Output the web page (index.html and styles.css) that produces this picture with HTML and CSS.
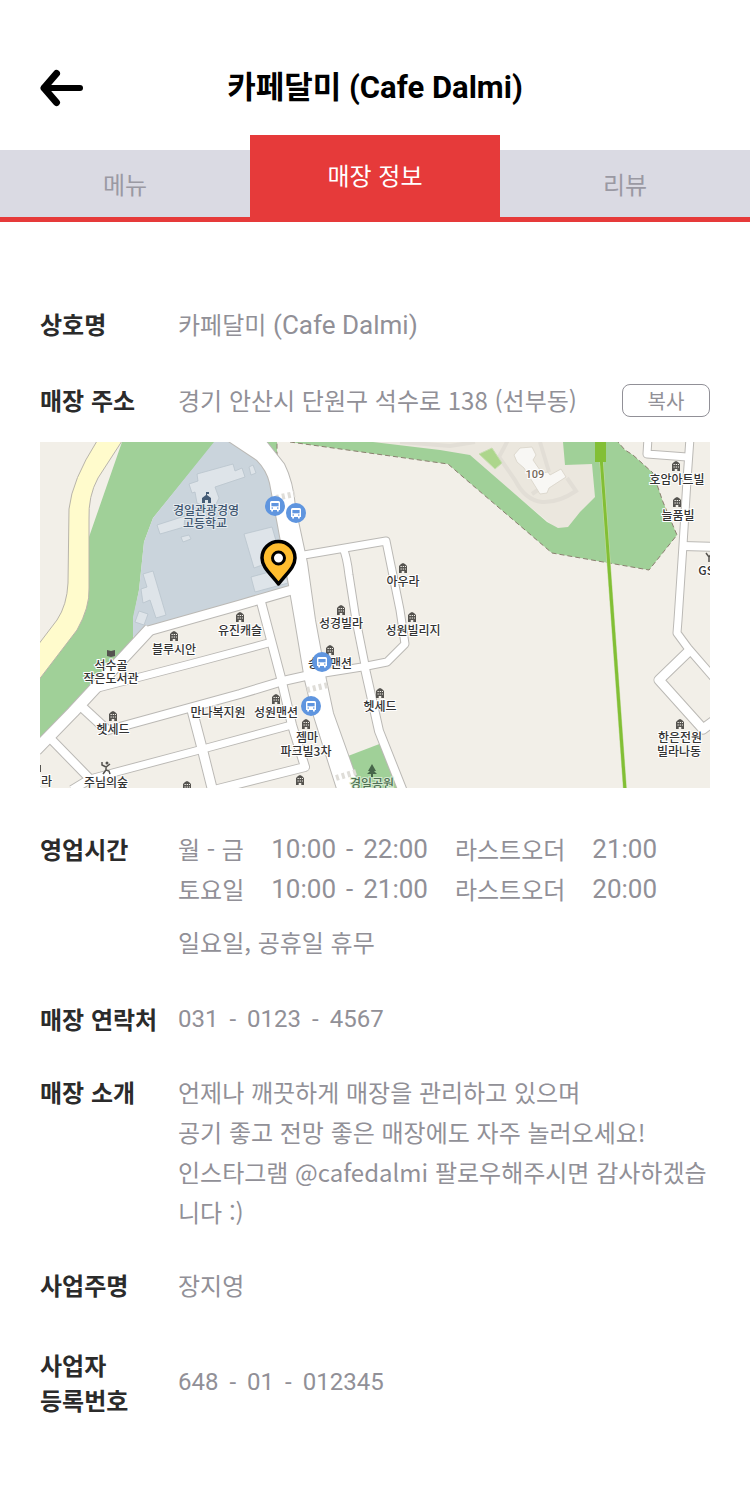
FILE: index.html
```html
<!DOCTYPE html>
<html lang="ko">
<head>
<meta charset="utf-8">
<meta name="viewport" content="width=device-width, initial-scale=1">
<title>카페달미 (Cafe Dalmi)</title>
<link rel="stylesheet" href="styles.css">
</head>
<body>
<header class="header">
  <button class="back" type="button" aria-label="뒤로">
    <svg viewBox="0 0 44 38" width="44" height="38" aria-hidden="true"><path d="M4 19H40" stroke-width="6"/><path d="M16.500 4.500L4 19L16.500 33.500" stroke-width="7"/></svg>
  </button>
  <h1 class="title">카페달미 (Cafe Dalmi)</h1>
</header>
<nav class="tabs">
  <a class="tab" href="#menu">메뉴</a>
  <a class="tab tab-active" href="#info" aria-current="page">매장 정보</a>
  <a class="tab" href="#review">리뷰</a>
</nav>
<main id="info">
  <dl class="info">
    <div class="row"><dt>상호명</dt><dd>카페달미 <span class="latin">(Cafe Dalmi)</span></dd></div>
    <div class="row row-address">
      <dt>매장 주소</dt>
      <dd class="address"><span>경기 안산시 단원구 석수로 138 (선부동)</span><button class="copy" type="button">복사</button></dd>
      <dd class="map">
<svg viewBox="40 442 670 346" role="img" aria-label="매장 위치 지도">
  <defs>
    <g id="bld"><path d="M-4 5V-2L-2 -4L0 -5L2 -4L4 -2V5H1.300V3H-1.300V5Z" fill="#55534f"/><path d="M-2.500 -1.500H3M-2.500 1H3" stroke="#f2efe8" stroke-width="1.200" stroke-dasharray="1.300 .9"/></g>
    <g id="bus"><circle r="10" fill="#5f95df"/><path d="M-3.500 -5H3.500Q5 -5 5 -3.500V4H3.800V5.500H2V4H-2V5.500H-3.800V4H-5V-3.500Q-5 -5 -3.500 -5Z" fill="#fff"/><path d="M-3.600 -3H3.600V.3H-3.600Z" fill="#5f95df"/><circle cx="-2.800" cy="2.100" r=".8" fill="#5f95df"/><circle cx="2.800" cy="2.100" r=".8" fill="#5f95df"/></g>
    <g id="roads" fill="none" stroke-linejoin="round">
      <path class="road road-xl" d="M150 629L73 712L36 750"/>
      <path class="road road-l" d="M148 631L240 605L295 589"/>
      <path class="road road-s" d="M98 688L190 664L272 642"/>
      <path class="road" d="M105 731L240 694L283 681L310 675"/>
      <path class="road road-s" d="M318 674L362 667L387 662L405 644L400 610L386 541L304 555"/>
      <path class="road road-s" d="M343 548Q347 557 349 575L356 620L365 665"/>
      <path class="road" d="M364 664L379 731L404 794"/>
      <path class="road" d="M261 602L281 678L292 725L305 767L214 790"/>
      <path class="road road-l" d="M192 710L203 752L213 792"/>
      <path class="road road-s" d="M90 779L203 749L295 724"/>
      <path class="road road-l" d="M82 707L108 731"/>
      <path class="road" d="M51 739L90 779L72 790"/>
      <path class="road road-s" d="M648 438L647 454L687 457"/>
      <path class="road road-s" d="M690 438L687 480L683 545L678 620L677 633L688 648L714 678"/>
      <path class="road" d="M683 546L714 547"/>
      <path class="road road-l" d="M689 651L659 680L703 729L714 721"/>
    </g>
    <path id="main-road" d="M227 440L257 460Q267 470 270 483L277 520L289 585L295 620L305 680L313 713L330 767L338 792H361L348 755L333 713L326 680L315 620L307 563L295 507Q293 482 284 464L265 440Z"/>
  </defs>
  <path fill="#f2efe8" d="M40 442H710V788H40Z"/>
  <path fill="#a0d098" d="M122 442H215L153 518L144 542L139 590L133 620V640L40 743V678Z"/>
  <path fill="#cad4dc" d="M214 442H240L275 475L292 588L145 632L133 637V617L139 590L144 542L153 518Z"/>
  <path fill="#fffbcc" stroke="#b8b4aa" d="M97 441Q72 480 69 509L68 583Q67 605 57 620L38 645V681L77 630Q90 607 89 588V520Q88 496 98 478L122 441Z"/>
  <g fill="#dee4e9" stroke="#b9c4cd" stroke-width=".8">
    <path d="M189 484L198 481L197 474L233 464L235 471L242 468L245 477L215 487L219 498L213 510L197 503L195 492L192 493Z"/>
    <path d="M249 467L253 465L256 473L251 475ZM157 525L185 516L184 527L160 534ZM181 537L189 535L191 539L183 542Z"/>
    <path d="M143 574L153 571L166 615L156 618L150 600L143 603L141 589L147 587ZM139 611L148 614L144 625L135 622Z"/>
    <path d="M244 534L272 527L281 558L254 568ZM251 577L284 568L288 583L255 592Z"/>
  </g>
  <path fill="#ebe7de" d="M370 442H566L596 462L598 500L568 528H556L470 458Z"/>
  <path fill="none" stroke="#e2ded6" stroke-width="4" d="M508 440L499 457L515 480Q525 500 542 502Q558 503 576 491L567 478M540 442L549 472M532 494L545 485M400 442L450 446L475 442"/>
  <path fill="#a0d098" d="M290 442H373L440 450L470 455L547 522L558 528L568 527L580 512L595 497L592 464L565 465L563 442H618L625 450L633 455L653 473L663 502L677 535L649 570L552 553L470 483L448 464ZM265 442H277V455Z"/>
  <path fill="none" stroke="#8b8070" stroke-dasharray="5 3" d="M290 442L448 464L470 483L552 553L649 570L677 535L663 502L653 473L633 455L625 450L618 442M265 442L277 455V442"/>
  <path fill="#add68c" stroke="#c7deb0" d="M479 454L492 448L502 463L495 469Z"/>
  <path fill="#f8f7f4" stroke="#d8d3c8" stroke-width=".8" d="M514 455L520 448L532 447L536 455L533 460L542 473L548 472L550 475L561 469L566 477L549 488L547 493L540 494L524 468L517 462Z"/>
  <path fill="#a0d098" d="M348 756L382 743L397 788H359Z"/>
  <g class="road-edge">
    <use href="#main-road" stroke-width="2"/>
    <use href="#roads"/>
  </g>
  <use href="#main-road" fill="#fff"/>
  <use href="#roads" stroke="#fff"/>
  <path stroke="#dfddd8" stroke-width="6" stroke-dasharray="3 3" fill="none" d="M276 498L295 494M307 690L328 685M336 778L356 772"/>
  <path stroke="#c5dda0" stroke-width="4" d="M600 442L625 790"/><path stroke="#82bf35" stroke-width="3" d="M600 442L625 790"/><path fill="#82bf35" d="M595 442H606V462H595Z"/>

  <g class="place">
    <text x="403" y="586">아우라</text><text x="341" y="628">성경빌라</text><text x="413" y="635">성원빌리지</text>
    <text x="240" y="635">유진캐슬</text><text x="174" y="654">블루시안</text><text x="111" y="670">석수골</text><text x="111" y="683">작은도서관</text>
    <text x="113" y="734">헷세드</text><text x="218" y="717">만나복지원</text><text x="276" y="717">성원맨션</text><text x="307" y="742">젬마</text><text x="306" y="756">파크빌3차</text>
    <text x="330" y="668">송학맨션</text><text x="380" y="711">헷세드</text><text x="677" y="484">호암아트빌</text><text x="678" y="520">늘품빌</text><text x="713" y="575">GS25</text>
    <text x="680" y="742">한은전원</text><text x="679" y="756">빌라나동</text><text x="106" y="787">주님의숲</text><text x="41" y="786">빌라</text>
    <text class="place-school" x="206" y="515">경일관광경영</text><text class="place-school" x="205" y="528">고등학교</text>
    <text class="place-park" x="372" y="788">경일공원</text><text class="place-num" x="535" y="478">109</text>
  </g>
  <use href="#bld" x="403" y="568"/><use href="#bld" x="341" y="610"/><use href="#bld" x="412" y="617"/><use href="#bld" x="240" y="617"/><use href="#bld" x="174" y="636"/><use href="#bld" x="330" y="650"/><use href="#bld" x="380" y="693"/><use href="#bld" x="276" y="699"/><use href="#bld" x="113" y="716"/><use href="#bld" x="306" y="724"/><use href="#bld" x="300" y="780"/><use href="#bld" x="187" y="786"/><use href="#bld" x="676" y="466"/><use href="#bld" x="677" y="502"/><use href="#bld" x="680" y="724"/>
  <path fill="#445b75" d="M202 503V498L206 495V492H209V494H207V495L211 498V503H208V500H205V503Z"/>
  <path fill="#55534f" d="M107 650L111 651L115 650V656L111 657L107 656ZM40 765H41V772H40Z"/>
  <g stroke="#55534f" stroke-width="1.500" fill="none"><path d="M102 762V765L106 767L110 764M106 767V770L103 774M106 770L109 771L110 774M706 553L709 557V562M712 553L709 557"/></g><circle cx="107" cy="763" r="1.500" fill="#55534f"/>
  <path fill="#47664a" d="M372 764L376 771H374L377 774H373V777H371V774H367L370 771H368Z"/>
  <use href="#bus" x="275" y="506"/><use href="#bus" x="296" y="513"/><use href="#bus" x="322" y="662"/><use href="#bus" x="311" y="706"/>
  <path fill="#ffbd2e" stroke="#000" stroke-width="3.500" stroke-linejoin="round" d="M278.500 584C270 573 262 567 262 558A16.500 16.500 0 0 1 295 558C295 567 287 573 278.500 584Z"/>
  <circle cx="278.500" cy="558" r="6" fill="#fff" stroke="#000" stroke-width="3"/>
</svg>
      </dd>
    </div>
    <div class="row row-hours">
      <dt>영업시간</dt>
      <dd>
        <table class="hours">
          <tr><th scope="row">월 - 금</th><td class="latin time"><span>10:00</span><span>-</span><span>22:00</span></td><td>라스트오더</td><td class="latin">21:00</td></tr>
          <tr><th scope="row">토요일</th><td class="latin time"><span>10:00</span><span>-</span><span>21:00</span></td><td>라스트오더</td><td class="latin">20:00</td></tr>
        </table>
        <p class="closed">일요일, 공휴일 휴무</p>
      </dd>
    </div>
    <div class="row row-phone"><dt>매장 연락처</dt><dd class="digits"><span>031</span><span>-</span><span>0123</span><span>-</span><span>4567</span></dd></div>
    <div class="row row-intro"><dt>매장 소개</dt><dd>언제나 깨끗하게 매장을 관리하고 있으며<br>공기 좋고 전망 좋은 매장에도 자주 놀러오세요!<br>인스타그램 @cafedalmi 팔로우해주시면 감사하겠습니다 :)</dd></div>
    <div class="row row-owner"><dt>사업주명</dt><dd>장지영</dd></div>
    <div class="row row-number"><dt>사업자<br>등록번호</dt><dd class="digits"><span>648</span><span>-</span><span>01</span><span>-</span><span>012345</span></dd></div>
  </dl>
</main>
</body>
</html>
```

FILE: styles.css
```css
* { box-sizing: border-box; }
body {
  margin: 0;
  background: #fff;
  color: #919097;
  font: 400 24px/40px "Noto Sans CJK KR", sans-serif;
}
button { font: inherit; color: inherit; cursor: pointer; }
.header {
  display: grid;
  grid-template-columns: 48px 1fr 48px;
  align-items: center;
  padding: 64px 40px 23px;
}
.back { display: flex; padding: 0; border: 0; background: none; }
.back svg { fill: none; stroke: #000; stroke-linecap: round; stroke-linejoin: round; }
.title {
  margin: 0;
  color: #000;
  font: 700 31px/48px Roboto, "Noto Sans CJK KR", sans-serif;
  text-align: center;
}
.tabs {
  display: flex;
  align-items: flex-end;
  border-bottom: 5px solid #e63a3a;
}
.tab {
  flex: 1;
  padding: 14px 0 13px;
  background: #dadae3;
  color: #9a99a3;
  text-align: center;
  text-decoration: none;
}
.tab-active {
  padding: 20px 0 22px;
  background: #e63a3a;
  color: #fff;
}
.info { margin: 0; padding: 82px 40px 64px; }
.row { display: grid; grid-template-columns: 138px 1fr; margin-bottom: 35px; }
dt { color: #2b2b2b; font-weight: 700; white-space: nowrap; }
dd { margin: 0; }
.latin { font-family: Roboto, "Noto Sans CJK KR", sans-serif; font-size: 26px; }
.address { display: flex; align-items: center; justify-content: space-between; }
.copy {
  width: 88px;
  height: 33px;
  padding: 0;
  border: 1px solid #919097;
  border-radius: 8px;
  background: #fff;
  font-size: 20px;
  line-height: 31px;
}
.map { grid-column: 1 / -1; margin-top: 22px; }
.map svg { display: block; width: 100%; }
.row-address { margin-bottom: 41px; }
.road { --width: 8px; stroke-width: calc(var(--width) + var(--edge, 0px)); }
.road-s { --width: 7px; }
.road-l { --width: 9px; }
.road-xl { --width: 11px; }
.road-edge { --edge: 2px; stroke: #bbb9b5; }
.place text {
  fill: #333;
  stroke: #fff;
  stroke-width: 2px;
  paint-order: stroke;
  font: 500 12px "Noto Sans CJK KR", sans-serif;
  text-anchor: middle;
}
.place .place-school { fill: #3f5670; stroke: #e3e9ee; }
.place .place-park { fill: #4f7054; stroke: #d5ead0; }
.place .place-num { fill: #75695c; font: 500 11px Roboto, sans-serif; }
.hours { border-collapse: collapse; }
.hours th, .hours td { height: 40px; padding: 0 27px 0 0; font-weight: 400; text-align: left; line-height: 40px; white-space: nowrap; }
.hours .time span + span { margin-left: 10px; }
.closed { margin: 13px 0 0; }
.row-hours { margin-bottom: 37px; }
.digits { display: flex; gap: 11px; font-family: Roboto, sans-serif; }
.row-phone, .row-intro { margin-bottom: 33px; }
.row-owner { margin-bottom: 42px; }
.row-number { align-items: center; margin-bottom: 0; line-height: 35px; }
```
